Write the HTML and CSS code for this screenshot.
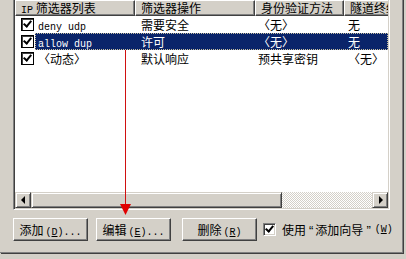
FILE: index.html
```html
<!DOCTYPE html>
<html lang="zh-CN">
<head>
  <meta charset="UTF-8">
  <title>IP 安全规则</title>
  <link rel="stylesheet" href="styles.css">
</head>
<body>
  <div class="page">
    <!-- 规则列表 -->
    <div class="listbox">
      <div class="list">
        <div class="head">
          <div class="hcell c1"><span class="en">IP</span> 筛选器列表</div>
          <div class="hcell c2">筛选器操作</div>
          <div class="hcell c3">身份验证方法</div>
          <div class="hcell c4">隧道终结点</div>
        </div>

        <div class="row">
          <div class="tick"><span class="chk"></span></div>
          <div class="rest">
            <div class="cell c1"><span class="en">deny udp</span></div>
            <div class="cell c2">需要安全</div>
            <div class="cell c3">〈无〉</div>
            <div class="cell c4">无</div>
          </div>
        </div>

        <div class="row sel">
          <div class="tick"><span class="chk"></span></div>
          <div class="rest">
            <div class="cell c1"><span class="en">allow dup</span></div>
            <div class="cell c2">许可</div>
            <div class="cell c3">〈无〉</div>
            <div class="cell c4">无</div>
          </div>
        </div>

        <div class="row">
          <div class="tick"><span class="chk"></span></div>
          <div class="rest">
            <div class="cell c1">〈动态〉</div>
            <div class="cell c2">默认响应</div>
            <div class="cell c3">预共享密钥</div>
            <div class="cell c4">〈无〉</div>
          </div>
        </div>
      </div>

      <div class="hscroll">
        <div class="sbtn"><span class="tri-left"></span></div>
        <div class="thumb"></div>
        <div class="track"></div>
        <div class="sbtn"><span class="tri-right"></span></div>
      </div>
    </div>

    <div class="actions">
      <button class="btn b1">添加<span class="en">(<u>D</u>)...</span></button>
      <button class="btn b2">编辑<span class="en">(<u>E</u>)...</span></button>
      <button class="btn b3">删除<span class="en">(<u>R</u>)</span></button>
      <label class="wizard">
        <span class="chk"></span>
        <span>使用<span class="qt">“</span>添加向导<span class="qt">”</span></span><span class="en">(<u>W</u>)</span>
      </label>
    </div>
  </div>

  <!-- 红色指示箭头 -->
  <svg class="arrow" width="406" height="259" viewBox="0 0 406 259">
    <line x1="125.5" y1="50" x2="125.5" y2="206" stroke="#d01010" stroke-width="1"/>
    <polygon points="120,204 131,204 125.5,215" fill="#e00000"/>
  </svg>
</body>
</html>
```

FILE: styles.css
```css
body {
  margin: 0;
  width: 406px;
  height: 259px;
  background: #d4d0c8;
  font-family: "Noto Sans CJK SC", "Liberation Sans", sans-serif;
  font-size: 12px;
  color: #000;
  overflow: hidden;
  position: relative;
}

.en {
  font-family: "Liberation Mono", "DejaVu Sans Mono", monospace;
  font-size: 10px;
}

.page {
  width: 402px;
  height: 254px;
  border-right: 1px solid #808080;
  border-bottom: 1px solid #808080;
  box-shadow: 1px 1px 0 #404040;
}

/* 列表框 */
.listbox {
  margin-left: 13px;
  margin-top: -2px;
  width: 373px;
  border-top: 1px solid #808080;
  border-left: 1px solid #808080;
  border-right: 1px solid #fff;
  border-bottom: 1px solid #fff;
  box-shadow: inset 1px 1px 0 #404040, inset -1px -1px 0 #d4d0c8;
  padding: 1px;
  background: #fff;
}

.list {
  height: 192px;
  overflow: hidden;
}

.head {
  display: flex;
  height: 16px;
  white-space: nowrap;
}

.hcell {
  box-sizing: border-box;
  height: 16px;
  line-height: 14px;
  padding-left: 5px;
  background: #d4d0c8;
  border-top: 1px solid #fff;
  border-left: 1px solid #fff;
  border-right: 1px solid #404040;
  box-shadow: inset -1px -1px 0 #808080;
  border-bottom: 1px solid #404040;
  overflow: hidden;
  flex: none;
}

.hcell.c1 { width: 120px; }
.hcell.c2 { width: 120px; }
.hcell.c3 { width: 89px; }
.hcell.c4 { width: 90px; }

.row {
  display: flex;
  height: 17px;
  line-height: 17px;
  white-space: nowrap;
}

.tick {
  width: 20px;
  flex: none;
  display: flex;
  align-items: center;
  padding-left: 6px;
  box-sizing: border-box;
}

.chk {
  display: inline-block;
  flex: none;
  box-sizing: border-box;
  width: 13px;
  height: 13px;
  background: #fff;
  border-top: 1px solid #808080;
  border-left: 1px solid #808080;
  border-right: 1px solid #fff;
  border-bottom: 1px solid #fff;
  box-shadow: inset 1px 1px 0 #404040, inset -1px -1px 0 #d4d0c8;
  position: relative;
}

.tick .chk {
  border: 1px solid #000;
  box-shadow: inset 1px 1px 0 #404040;
}

.chk::after {
  content: "";
  position: absolute;
  left: 3px;
  top: 0;
  width: 3px;
  height: 6px;
  border-right: 2px solid #000;
  border-bottom: 2px solid #000;
  transform: rotate(40deg);
}

.rest {
  display: flex;
  flex: 1;
  box-sizing: border-box;
}

.row.sel .rest {
  background: #0a246a;
  color: #fff;
  outline: 1px dotted #c8c0a0;
  outline-offset: -1px;
}

.cell {
  flex: none;
  overflow: hidden;
  box-sizing: border-box;
}

.cell.c1 { width: 100px; padding-left: 3px; }
.cell.c2 { width: 120px; padding-left: 6px; }
.cell.c3 { width: 89px; padding-left: 3px; }
.cell.c4 { width: 40px; padding-left: 4px; }

/* 水平滚动条 */
.hscroll {
  display: flex;
  height: 16px;
}

.sbtn,
.thumb {
  box-sizing: border-box;
  height: 16px;
  background: #d4d0c8;
  border-top: 1px solid #d4d0c8;
  border-left: 1px solid #d4d0c8;
  border-right: 1px solid #404040;
  border-bottom: 1px solid #404040;
  box-shadow: inset 1px 1px 0 #fff, inset -1px -1px 0 #808080;
}

.sbtn {
  width: 16px;
  display: flex;
  align-items: center;
  justify-content: center;
}

.thumb { width: 251px; }

.track {
  flex: 1;
  background: repeating-conic-gradient(#fff 0 25%, #d4d0c8 0 50%) 0 0 / 2px 2px;
}

.tri-left {
  width: 0;
  height: 0;
  border-top: 4px solid transparent;
  border-bottom: 4px solid transparent;
  border-right: 4px solid #000;
  margin-left: -1px;
}

.tri-right {
  width: 0;
  height: 0;
  border-top: 4px solid transparent;
  border-bottom: 4px solid transparent;
  border-left: 4px solid #000;
  margin-left: 1px;
}

/* 按钮行 */
.actions {
  display: flex;
  align-items: center;
  margin-top: 8px;
  padding-left: 13px;
}

.btn {
  box-sizing: border-box;
  width: 75px;
  height: 23px;
  padding: 0;
  font-family: inherit;
  font-size: 12px;
  color: #000;
  background: #d4d0c8;
  border-top: 1px solid #fff;
  border-left: 1px solid #fff;
  border-right: 1px solid #404040;
  border-bottom: 1px solid #404040;
  box-shadow: inset -1px -1px 0 #808080;
  white-space: nowrap;
}

.btn .en { margin-left: 2px; }

.b2 { margin-left: 8px; }
.b3 { margin-left: 11px; }

.wizard {
  display: flex;
  align-items: center;
  margin-left: 6px;
  white-space: nowrap;
}

.wizard .chk { margin-right: 6px; }
.wizard .en { margin-left: 2px; }

.qt {
  font-family: "Liberation Sans", sans-serif;
  font-size: 13px;
  margin: 0 2px 0 3px;
}

.arrow {
  position: absolute;
  left: 0;
  top: 0;
  pointer-events: none;
}
```
